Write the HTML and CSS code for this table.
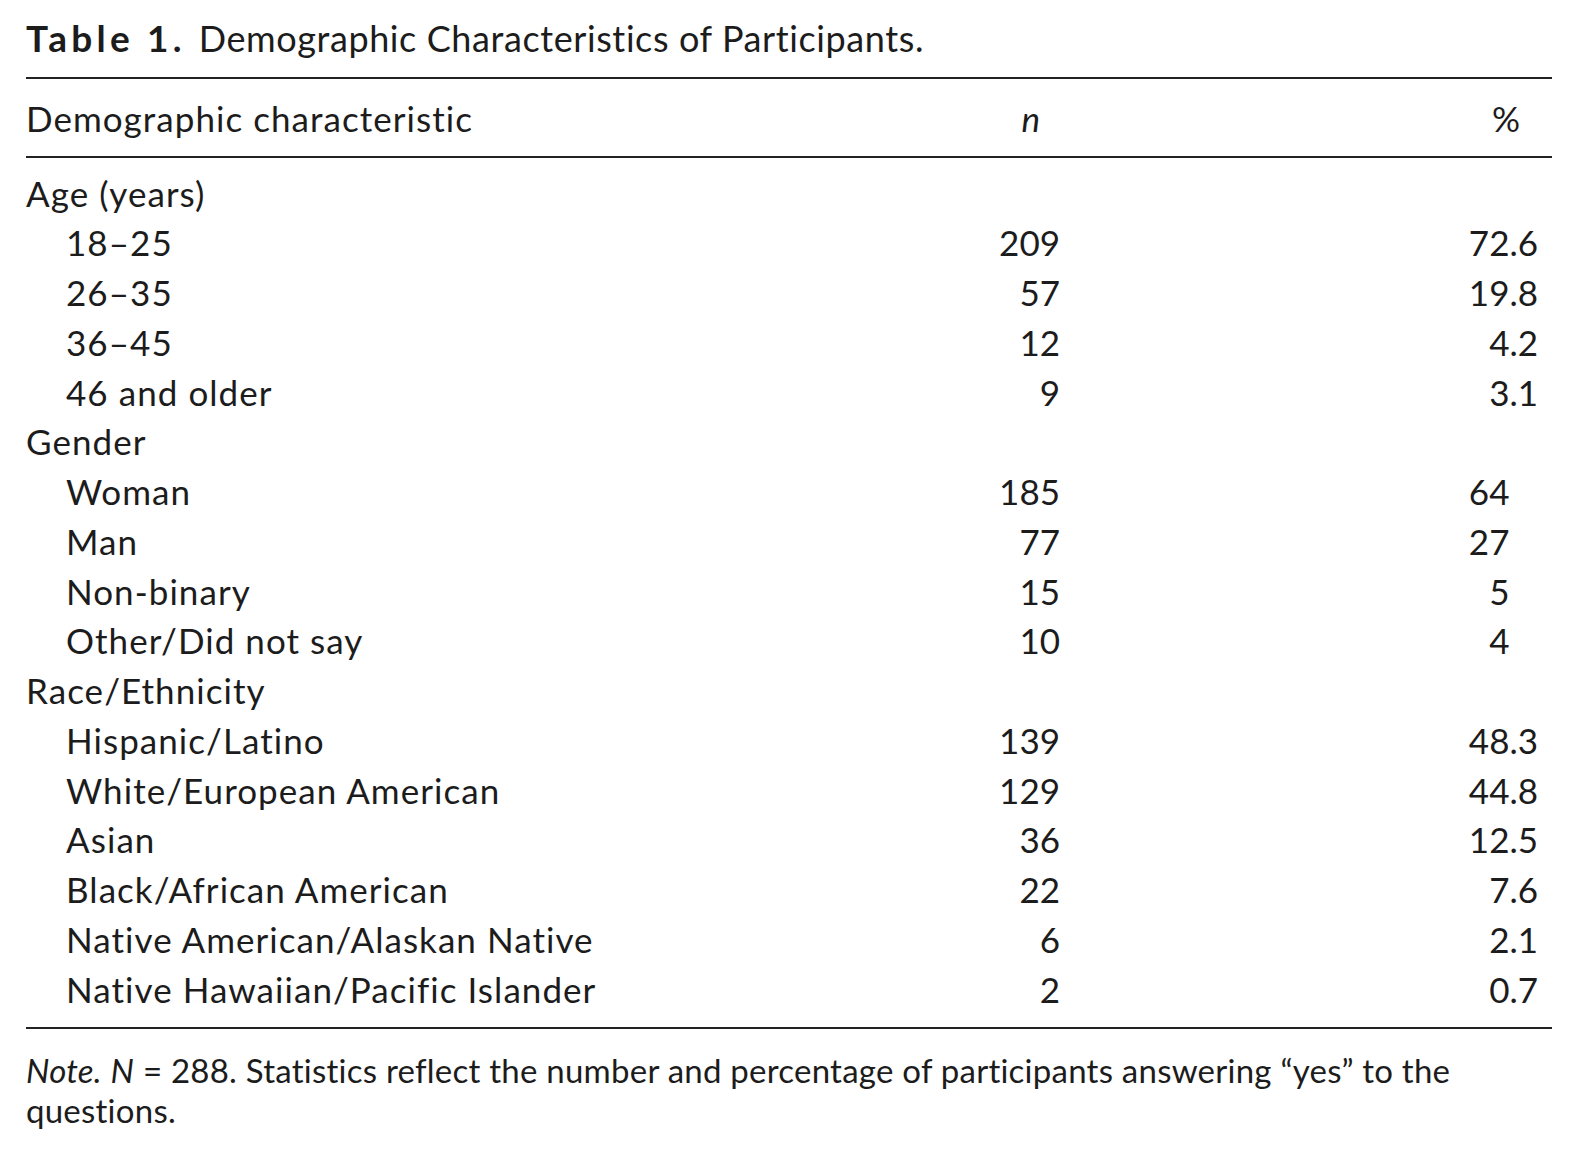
FILE: index.html
```html
<!DOCTYPE html>
<html lang="en">
<head>
<meta charset="utf-8">
<title>Table 1. Demographic Characteristics of Participants.</title>
<link rel="stylesheet" href="styles.css">
</head>
<body>
<div class="page">
  <div class="caption"><span class="label">Table 1.</span><span class="title">Demographic Characteristics of Participants.</span></div>
  <div class="table">
    <div class="head">
      <div class="c-label">Demographic characteristic</div>
      <div class="c-n"><i>n</i></div>
      <div class="c-pct">%</div>
    </div>
    <div class="body">
      <div class="row group"><div class="c-label">Age (years)</div><div class="c-n"></div><div class="c-pct"></div></div>
      <div class="row"><div class="c-label sub">18–25</div><div class="c-n">209</div><div class="c-pct">72.6</div></div>
      <div class="row"><div class="c-label sub">26–35</div><div class="c-n">57</div><div class="c-pct">19.8</div></div>
      <div class="row"><div class="c-label sub">36–45</div><div class="c-n">12</div><div class="c-pct">4.2</div></div>
      <div class="row"><div class="c-label sub">46 and older</div><div class="c-n">9</div><div class="c-pct">3.1</div></div>
      <div class="row group"><div class="c-label">Gender</div><div class="c-n"></div><div class="c-pct"></div></div>
      <div class="row"><div class="c-label sub">Woman</div><div class="c-n">185</div><div class="c-pct">64<span class="pad">.0</span></div></div>
      <div class="row"><div class="c-label sub">Man</div><div class="c-n">77</div><div class="c-pct">27<span class="pad">.0</span></div></div>
      <div class="row"><div class="c-label sub">Non-binary</div><div class="c-n">15</div><div class="c-pct">5<span class="pad">.0</span></div></div>
      <div class="row"><div class="c-label sub">Other/Did not say</div><div class="c-n">10</div><div class="c-pct">4<span class="pad">.0</span></div></div>
      <div class="row group"><div class="c-label">Race/Ethnicity</div><div class="c-n"></div><div class="c-pct"></div></div>
      <div class="row"><div class="c-label sub">Hispanic/Latino</div><div class="c-n">139</div><div class="c-pct">48.3</div></div>
      <div class="row"><div class="c-label sub">White/European American</div><div class="c-n">129</div><div class="c-pct">44.8</div></div>
      <div class="row"><div class="c-label sub">Asian</div><div class="c-n">36</div><div class="c-pct">12.5</div></div>
      <div class="row"><div class="c-label sub">Black/African American</div><div class="c-n">22</div><div class="c-pct">7.6</div></div>
      <div class="row"><div class="c-label sub">Native American/Alaskan Native</div><div class="c-n">6</div><div class="c-pct">2.1</div></div>
      <div class="row"><div class="c-label sub">Native Hawaiian/Pacific Islander</div><div class="c-n">2</div><div class="c-pct">0.7</div></div>
    </div>
  </div>
  <p class="note"><i>Note.</i> <i>N</i> = 288. Statistics reflect the number and percentage of participants answering “yes” to the<br>questions.</p>
</div>
</body>
</html>
```
FILE: styles.css
```css
html, body {
  margin: 0;
  padding: 0;
  background: #ffffff;
}
.page {
  width: 1526px;
  margin-left: 26px;
  font-family: Lato, "Noto Sans", sans-serif;
  color: #1c1c1c;
  font-size: 35px;
}
.caption {
  font-size: 36px;
  line-height: 60px;
  padding-top: 8px;
  height: 69px;
  border-bottom: 2px solid #222;
  white-space: nowrap;
}
.caption .label {
  font-size: 37px;
  font-weight: 700;
  letter-spacing: 4.2px;
  margin-right: 13px;
}
.caption .title {
  letter-spacing: 0.6px;
}
.head, .row {
  display: grid;
  grid-template-columns: 834px 200px 478px 14px;
}
.c-label {
  letter-spacing: 1.05px;
  white-space: nowrap;
}
.head {
  line-height: 76px;
  padding-top: 1px;
  border-bottom: 2px solid #222;
}
.c-n, .c-pct {
  text-align: right;
}
.head .c-n {
  padding-right: 20px;
}
.head .c-pct {
  padding-right: 18px;
}
.body {
  padding-top: 10.6px;
  padding-bottom: 12.6px;
  border-bottom: 2px solid #222;
}
.row {
  line-height: 49.75px;
}
.sub {
  padding-left: 40px;
}
.pad {
  visibility: hidden;
}
.note {
  margin: 0;
  padding-top: 21.5px;
  font-size: 33px;
  line-height: 40px;
  letter-spacing: 0.24px;
  white-space: nowrap;
}
```
